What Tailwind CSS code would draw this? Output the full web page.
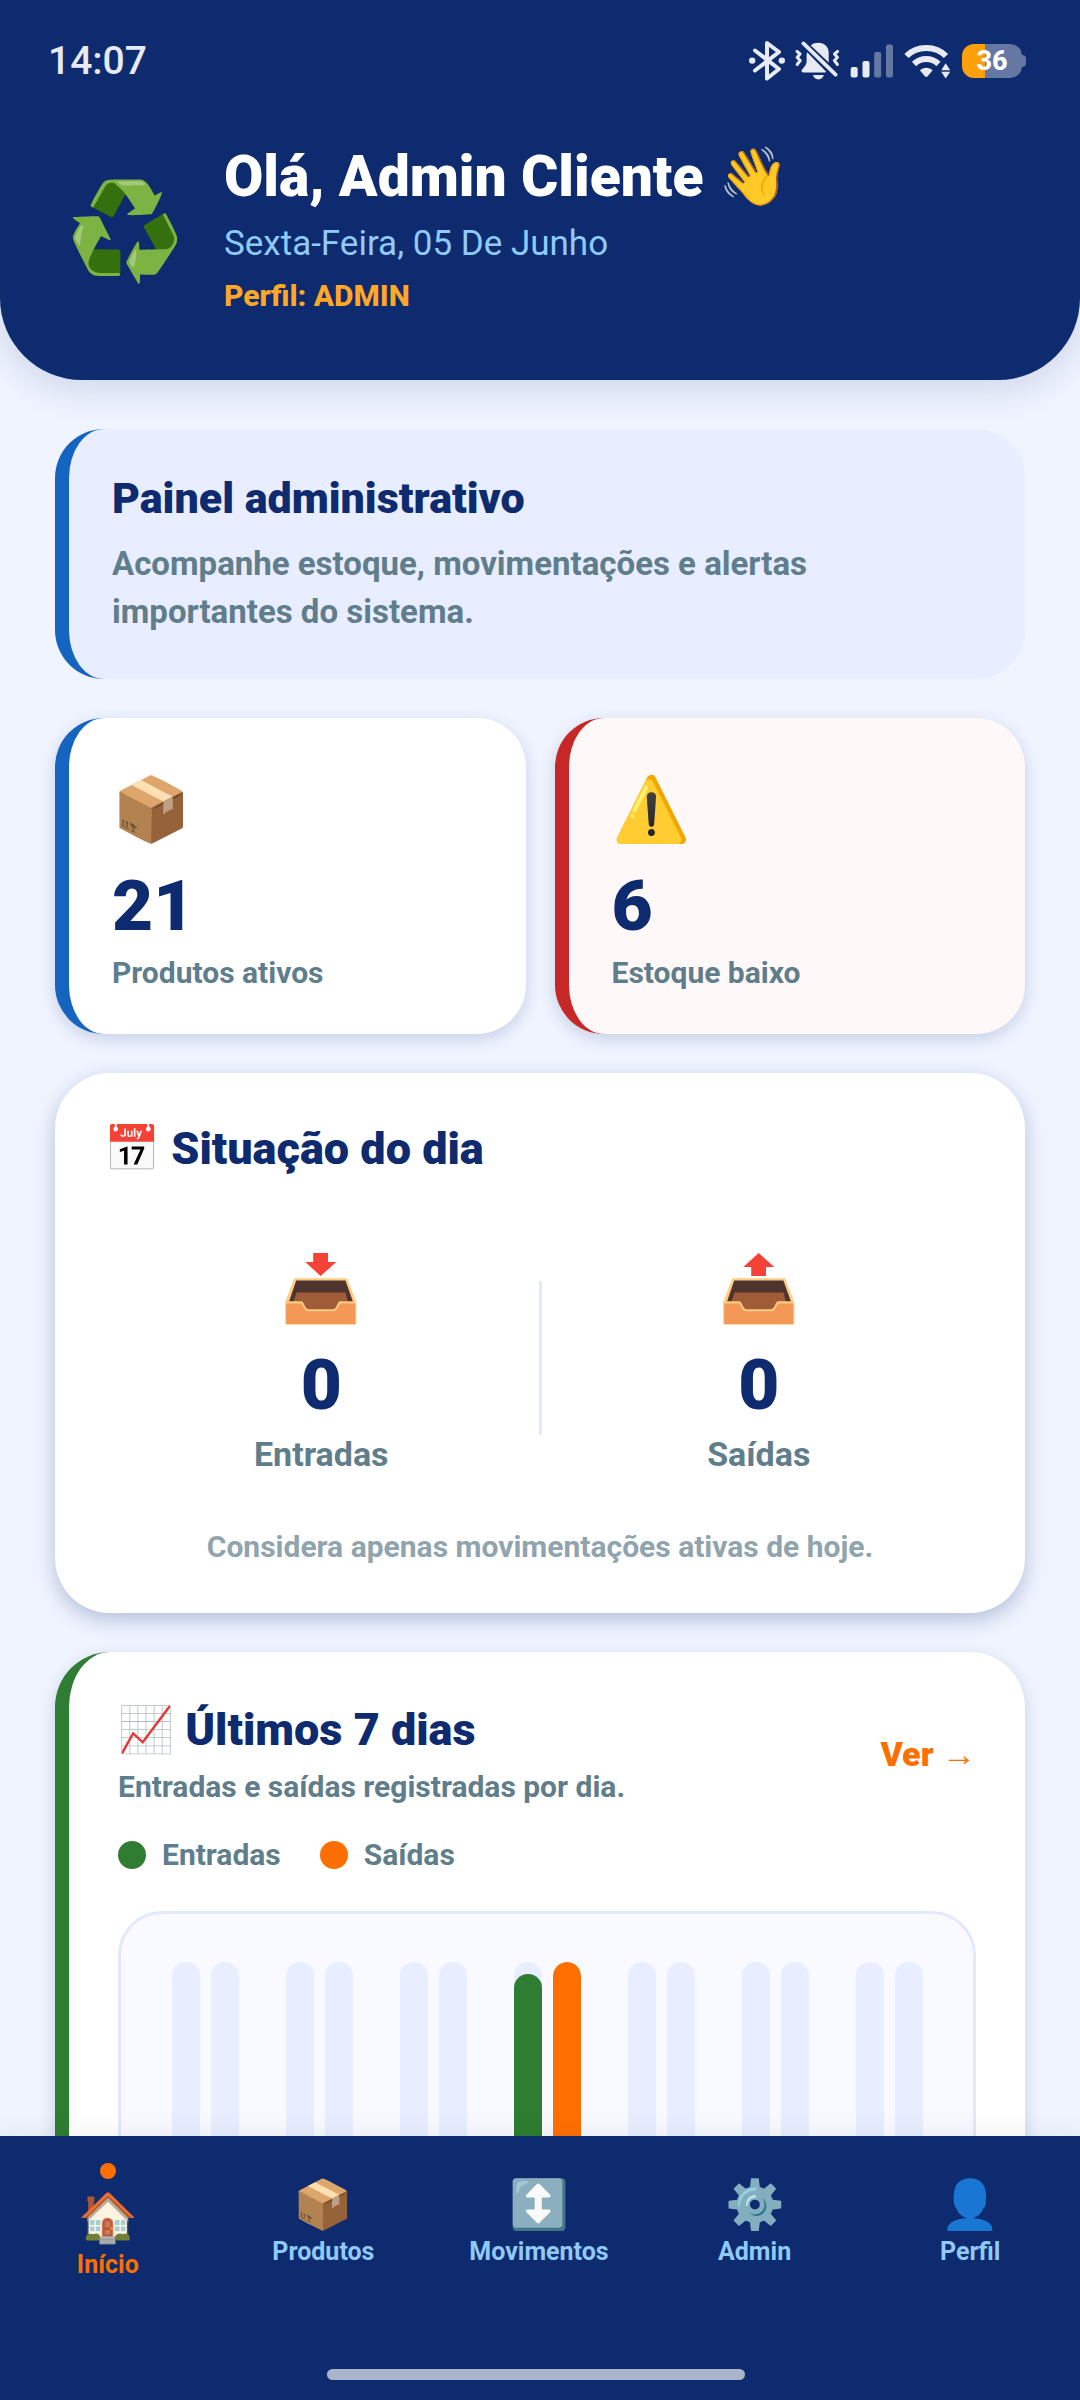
<!DOCTYPE html>
<html lang="pt-BR">
<head>
  <meta charset="UTF-8" />
  <meta name="viewport" content="width=device-width, initial-scale=1.0" />
  <title>Painel administrativo</title>
  <script src="https://cdn.jsdelivr.net/npm/@tailwindcss/browser@4"></script>
</head>
<body class="bg-[#f0f4ff] text-[#0d2b6e] font-['Roboto',sans-serif]">
  <div class="h-screen flex flex-col overflow-hidden">

    <!-- Header -->
    <header class="relative z-10 shrink-0 bg-[#0d2b6e] rounded-b-[82px] shadow-[0_8px_36px_rgba(13,43,110,0.16)] pb-[67px]">
      <!-- Status bar -->
      <div class="flex items-center justify-between pl-12 pr-[54px] pt-[38px] text-[#e7eaf3]">
        <span class="text-[39px] leading-[46px] font-medium">14:07</span>
        <div class="flex items-center gap-[10px]">
          <!-- Bluetooth -->
          <svg class="w-9 h-10" viewBox="0 0 36 40" fill="none" stroke="currentColor" stroke-width="4" stroke-linecap="round" stroke-linejoin="round">
            <path d="M6 9.5 30 28 18 37.5V2L30 11 6 29.5" />
            <circle cx="3.2" cy="19.6" r="3.2" fill="currentColor" stroke="none" />
            <circle cx="32.8" cy="19.6" r="3.2" fill="currentColor" stroke="none" />
          </svg>
          <!-- Muted bell -->
          <svg class="w-[45px] h-10" viewBox="0 0 45 40" fill="currentColor">
            <path d="M16 4.2C18 2.6 20.6 1.8 23.4 1.8c6 0 10.3 4.2 10.3 10.2v9.6L15.8 4.4Z" />
            <path d="M12.2 11.2 31 30.4c-.3.9-1 1.1-2 1.1H8.4c-1.8 0-2.4-1.5-1.3-2.9l3.2-4.2c1-1.4 1.3-2.7 1.3-4.4v-5.5c0-1.2.1-2.2.6-3.3Z" />
            <path d="M18 34h10.8c-.6 2.6-2.7 4.4-5.4 4.4S18.6 36.6 18 34Z" />
            <path d="M8.4 2.4 40.6 33.6" fill="none" stroke="currentColor" stroke-width="3.8" stroke-linecap="round" />
            <path d="M2 10.4 5 13 2.2 16.5 5.2 19.5 2.2 23.5M42.6 10.4 39.6 13 42.4 16.5 39.4 19.5 42.4 23.5" fill="none" stroke="currentColor" stroke-width="3" stroke-linecap="round" stroke-linejoin="round" />
          </svg>
          <!-- Signal -->
          <svg class="w-11 h-9" viewBox="0 0 44 36" fill="currentColor">
            <rect x="0.7" y="24" width="7" height="10.6" rx="2" />
            <rect x="12.5" y="18" width="7" height="16.6" rx="2" />
            <rect x="24.2" y="9" width="7" height="25.6" rx="2" opacity=".4" />
            <rect x="36" y="1.5" width="7" height="33" rx="2" opacity=".4" />
          </svg>
          <!-- Wi-Fi -->
          <svg class="w-12 h-9" viewBox="0 0 48 36" fill="currentColor">
            <path d="M2.5 13C13 2.3 31.500 2.3 42 13" fill="none" stroke="currentColor" stroke-width="6" />
            <path d="M10 21C17 14.3 27.5 14.3 34.5 21" fill="none" stroke="currentColor" stroke-width="6" />
            <path d="M15.8 27.2C19.5 23.8 25 23.8 28.7 27.2L23.6 33.2c-.8.9-1.9.9-2.7 0Z" />
            <path d="M41.7 20.2 46.2 27.2H37.2ZM37.2 28.8H46.2L41.7 35.4Z" />
          </svg>
          <!-- Battery -->
          <div class="flex items-center">
            <div class="w-[60px] h-[34px] rounded-[12px] flex items-center justify-center bg-linear-to-r from-[#ff9f0a] from-38% to-[#6577a3] to-38%">
              <span class="text-[27px] leading-[34px] font-extrabold text-white">36</span>
            </div>
            <div class="w-1 h-3 rounded-r-full bg-[#6577a3]"></div>
          </div>
        </div>
      </div>

      <div class="flex items-center gap-10 px-[66px] pt-[59px]">
        <span class="pt-2 text-[95px] leading-[104px]">♻️</span>
        <div>
          <h1 class="text-[57px] leading-[67px] font-black text-white">Olá, Admin Cliente 👋</h1>
          <p class="mt-[13px] text-[35px] leading-[41px] text-[#90caf9]">Sexta-Feira, 05 De Junho</p>
          <p class="mt-[14px] text-[30px] leading-[35px] font-extrabold text-[#ffa726]">Perfil: ADMIN</p>
        </div>
      </div>
    </header>

    <!-- Content -->
    <main class="flex-1 min-h-0 overflow-y-auto [scrollbar-width:none] px-[55px] pt-[49px] pb-10 flex flex-col gap-[39px]">
      <section class="shrink-0 rounded-[49px] border-l-[14px] border-[#1565c0] bg-[#e8edff] p-11 pl-[43px] pb-[43px]">
        <h2 class="text-[43px] leading-[50px] font-black">Painel administrativo</h2>
        <p class="mt-[17px] max-w-[760px] text-[33px] leading-[48px] font-bold text-[#607d8b]">Acompanhe estoque, movimentações e alertas importantes do sistema.</p>
      </section>

      <div class="shrink-0 grid grid-cols-2 gap-[29px]">
        <a href="#produtos" class="block rounded-[49px] border-l-[14px] border-[#1565c0] bg-white p-11 pl-[43px] shadow-[0_5px_16px_rgba(13,43,110,0.18)]">
          <div class="text-[63px] leading-[96px]">📦</div>
          <div class="mt-[6px] text-[71px] leading-[83px] font-black">21</div>
          <div class="mt-2 text-[30px] leading-[35px] font-bold text-[#607d8b]">Produtos ativos</div>
        </a>
        <a href="#estoque" class="block rounded-[49px] border-l-[14px] border-[#c62828] bg-[#fff8f8] p-11 pl-[43px] shadow-[0_5px_16px_rgba(13,43,110,0.18)]">
          <div class="text-[63px] leading-[96px]">⚠️</div>
          <div class="mt-[6px] text-[71px] leading-[83px] font-black">6</div>
          <div class="mt-2 text-[30px] leading-[35px] font-bold text-[#607d8b]">Estoque baixo</div>
        </a>
      </div>

      <!-- Today -->
      <section class="shrink-0 rounded-[55px] bg-white p-[49px] shadow-[0_7px_20px_rgba(13,43,110,0.26)]">
        <h2 class="text-[45px] leading-[53px] font-black">📅 Situação do dia</h2>
        <div class="mt-[66px] flex items-center text-center">
          <div class="flex-1">
            <svg class="mx-auto mt-3 mb-[18px] size-[72px]" viewBox="0 0 72 72">
              <path d="M28.2 0H43V9H51.3L35.6 23 20.3 9H28.2Z" fill="#f44336" />
              <path d="M9.5 25.2H62L71.3 49V70.5Q71.3 71.8 70 71.8H1.5Q.2 71.8.2 70.5V49Z" fill="#ffcc80" />
              <path d="M11.2 27.6H60.4L68 48.8V56H4V48.8Z" fill="#4e342e" />
              <path d="M11.5 39.6H60.5L63 49V58H8.5V49Z" fill="#a05c38" />
              <path d="M1 48.3H16C19.5 48.3 19.5 56.2 23.5 56.2H48C52 56.2 52 48.3 55.5 48.3H70.6V60H1Z" fill="#ffcc80" />
              <path d="M1.2 50.5H15C18.5 50.5 18.5 58.3 22.8 58.3H48.8C53 58.3 53 50.5 56.5 50.5H70.3V71H1.2Z" fill="#f49858" />
            </svg>
            <div class="text-[71px] leading-[83px] font-black">0</div>
            <div class="mt-2 text-[34px] leading-[40px] font-bold text-[#607d8b]">Entradas</div>
          </div>
          <div class="w-[3px] h-[154px] bg-[#e3e8fc]"></div>
          <div class="flex-1">
            <svg class="mx-auto mt-3 mb-[18px] size-[72px]" viewBox="0 0 72 72">
              <path d="M35.6 0 51.3 14H43V23H28.2V14H20.3Z" fill="#f44336" />
              <path d="M9.5 25.2H62L71.3 49V70.5Q71.3 71.8 70 71.8H1.5Q.2 71.8.2 70.5V49Z" fill="#ffcc80" />
              <path d="M11.2 27.6H60.4L68 48.8V56H4V48.8Z" fill="#4e342e" />
              <path d="M11.5 39.6H60.5L63 49V58H8.5V49Z" fill="#a05c38" />
              <path d="M1 48.3H16C19.5 48.3 19.5 56.2 23.5 56.2H48C52 56.2 52 48.3 55.5 48.3H70.6V60H1Z" fill="#ffcc80" />
              <path d="M1.2 50.5H15C18.5 50.5 18.5 58.3 22.8 58.3H48.8C53 58.3 53 50.5 56.5 50.5H70.3V71H1.2Z" fill="#f49858" />
            </svg>
            <div class="text-[71px] leading-[83px] font-black">0</div>
            <div class="mt-2 text-[34px] leading-[40px] font-bold text-[#607d8b]">Saídas</div>
          </div>
        </div>
        <p class="mt-[55px] text-center text-[30px] leading-[35px] font-bold text-[#90a4ae]">Considera apenas movimentações ativas de hoje.</p>
      </section>

      <!-- Last 7 days -->
      <section class="shrink-0 rounded-[55px] border-l-[14px] border-[#2e7d32] bg-white p-[49px] pt-[51px] shadow-[0_5px_16px_rgba(13,43,110,0.18)]">
        <div class="flex items-center justify-between">
          <div>
            <h2 class="text-[45px] leading-[53px] font-black">📈 Últimos 7 dias</h2>
            <p class="mt-[13px] text-[30px] leading-[35px] font-bold text-[#607d8b]">Entradas e saídas registradas por dia.</p>
          </div>
          <a href="#movimentos" class="text-[34px] leading-[40px] font-black text-[#ff6f00]">Ver →</a>
        </div>

        <div class="mt-[33px] flex gap-[39px] text-[30px] leading-[35px] font-bold text-[#607d8b]">
          <div class="flex items-center gap-4"><span class="size-7 rounded-full bg-[#2e7d32]"></span>Entradas</div>
          <div class="flex items-center gap-4"><span class="size-7 rounded-full bg-[#ff6f00]"></span>Saídas</div>
        </div>

        <div id="chart" class="mt-[39px] grid grid-cols-7 rounded-[44px] border-[3px] border-[#e3e8fc] bg-[#f8faff] px-[27px] py-12"></div>
      </section>
    </main>

    <!-- Bottom navigation -->
    <nav class="relative z-10 shrink-0 bg-[#0d2b6e] pt-[27px] pb-5 shadow-[0_-4px_24px_rgba(0,0,0,0.06)]">
      <div class="grid grid-cols-5 items-center pr-[2px] text-center text-[25px] leading-[30px] font-bold text-[#90caf9]">
        <a href="#inicio" aria-current="page" class="flex flex-col items-center text-[#ff6f00]">
          <span class="size-4 mb-[11px] rounded-full bg-[#ff6f00]"></span>
          <span class="text-5xl leading-[56px]">🏠</span>
          <span class="mt-1">Início</span>
        </a>
        <a href="#produtos" class="flex flex-col items-center">
          <span class="text-5xl leading-[56px]">📦</span>
          <span class="mt-1">Produtos</span>
        </a>
        <a href="#movimentos" class="flex flex-col items-center">
          <span class="text-5xl leading-[56px]">↕️</span>
          <span class="mt-1">Movimentos</span>
        </a>
        <a href="#admin" class="flex flex-col items-center">
          <span class="text-5xl leading-[56px]">⚙️</span>
          <span class="mt-1">Admin</span>
        </a>
        <a href="#perfil" class="flex flex-col items-center">
          <span class="text-5xl leading-[56px]">👤</span>
          <span class="mt-1">Perfil</span>
        </a>
      </div>
      <div class="flex justify-center pr-2 pt-[89px]">
        <div class="w-[418px] h-[11px] rounded-full bg-white/65"></div>
      </div>
    </nav>
  </div>

  <script>
    // percentages of the tallest bar, oldest day first
    const days = [[0, 0], [0, 0], [0, 0], [96, 100], [0, 0], [0, 0], [0, 0]];

    function bar(value, color) {
      return `<div class="flex w-7 h-[300px] items-end overflow-hidden rounded-full bg-[#e8edff]">
        <div class="w-full rounded-full ${color}" style="height: ${value}%"></div>
      </div>`;
    }

    document.getElementById('chart').innerHTML = days.map(([entradas, saidas]) =>
      `<div class="flex justify-center gap-[11px]">${bar(entradas, 'bg-[#2e7d32]')}${bar(saidas, 'bg-[#ff6f00]')}</div>`
    ).join('');
  </script>
</body>
</html>
